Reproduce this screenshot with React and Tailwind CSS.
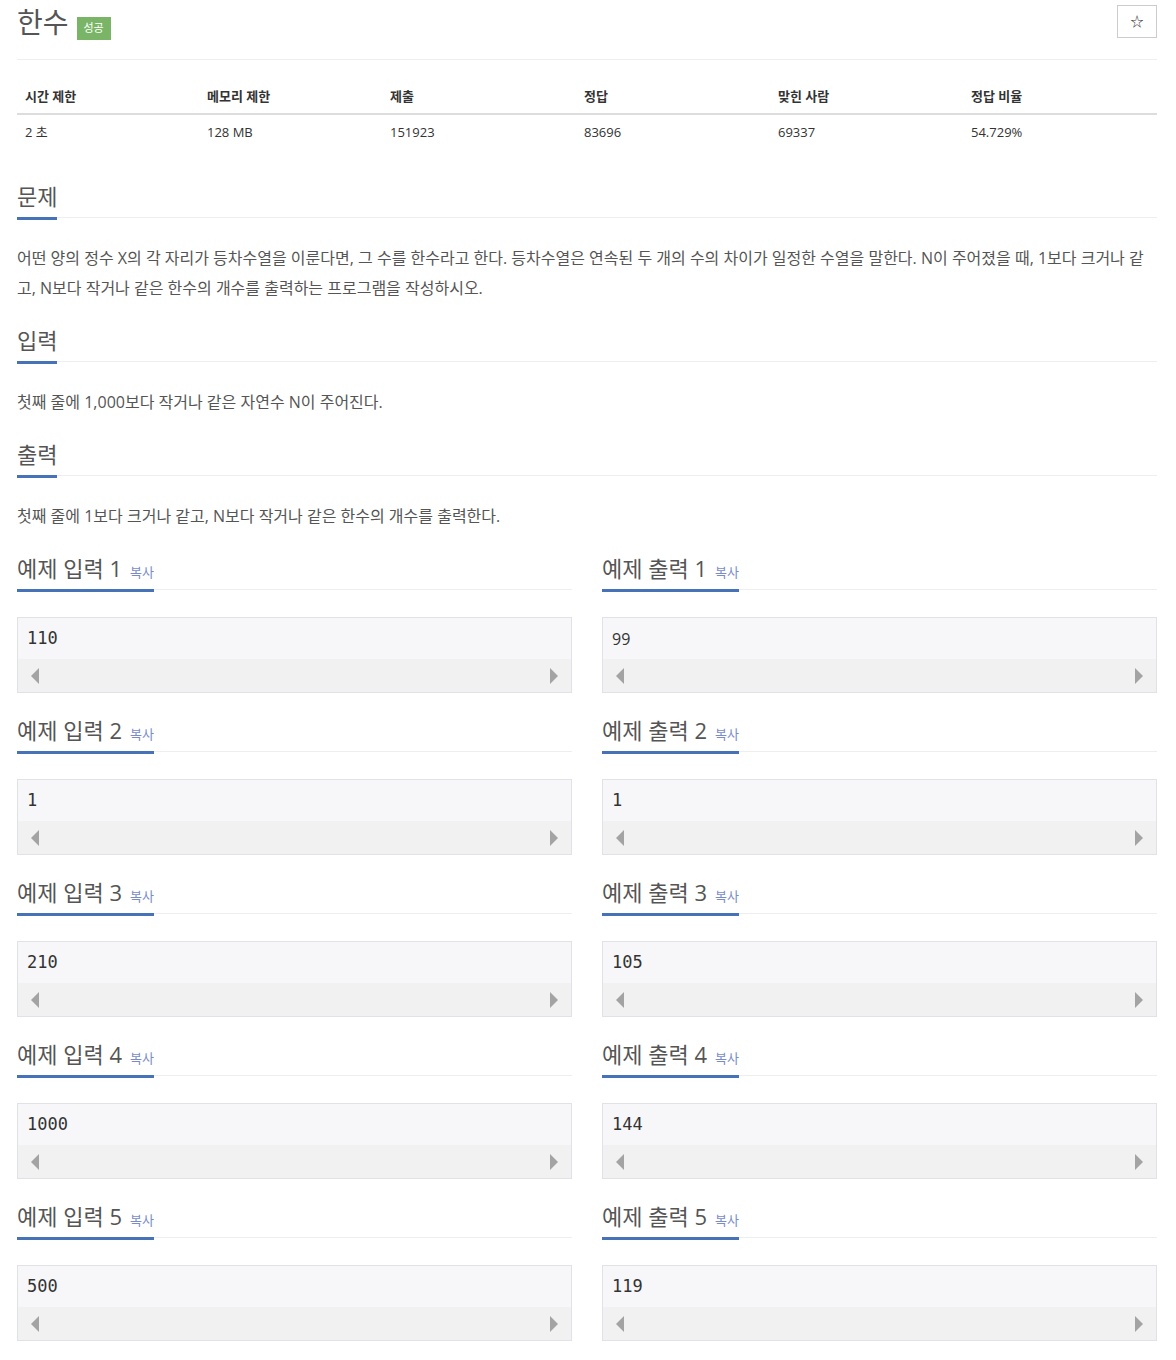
import { useState } from "react";

const stats = [
  { label: "시간 제한", value: "2 초" },
  { label: "메모리 제한", value: "128 MB" },
  { label: "제출", value: "151923" },
  { label: "정답", value: "83696" },
  { label: "맞힌 사람", value: "69337" },
  { label: "정답 비율", value: "54.729%" },
];

const samples = [
  { input: "110", output: "99", sansOut: true },
  { input: "1", output: "1" },
  { input: "210", output: "105" },
  { input: "1000", output: "144" },
  { input: "500", output: "119" },
];

function Headline({ children, copy }) {
  return (
    <div className="flex border-b border-[#eee]">
      <h2 className="-mb-[3px] block border-b-[3px] border-[#4673b8] pb-[5px] text-[22px] leading-[32px] font-normal text-[#555]">
        {children}
        {copy && (
          <span className="ml-[8px] text-[13px] leading-none text-[#7a8cc8]">복사</span>
        )}
      </h2>
    </div>
  );
}

function Arrow({ dir }) {
  return (
    <svg width="8" height="16" viewBox="0 0 8 16">
      {dir === "left" ? (
        <polygon points="8,0 8,16 0,8" fill="#a3a3a3" />
      ) : (
        <polygon points="0,0 0,16 8,8" fill="#a3a3a3" />
      )}
    </svg>
  );
}

function SampleBox({ text, sans }) {
  return (
    <div className="mt-[27px] border border-[#e1e1e8] bg-[#f7f7f9]">
      <div
        className={`flex h-[41px] items-center px-[9px] text-[#333] ${
          sans
            ? "font-['Open_Sans',sans-serif] text-[16px]"
            : "font-['DejaVu_Sans_Mono',monospace] text-[17px]"
        }`}
      >
        {text}
      </div>
      <div className="flex h-[33px] items-center justify-between bg-[#f1f1f1] px-[13px]">
        <Arrow dir="left" />
        <Arrow dir="right" />
      </div>
    </div>
  );
}

export default function App() {
  const [starred, setStarred] = useState(false);

  return (
    <div className="min-h-[1360px] bg-white font-['Open_Sans','Noto_Sans_CJK_KR',sans-serif]">
      <div className="ml-[17px] w-[1140px]">
        {/* Title */}
        <div className="flex items-start justify-between border-b border-[#eee] pt-[5px] pb-[20px]">
          <div className="flex items-end">
            <h1 className="text-[28px] leading-[34px] font-normal text-[#555]">
              한수
            </h1>
            <span className="ml-[8px] -mb-[1px] flex h-[23px] w-[34px] items-center justify-center bg-[#7ab567] text-[11px] text-white">
              성공
            </span>
          </div>
          <button
            onClick={() => setStarred(!starred)}
            className="flex h-[33px] w-[40px] items-center justify-center border border-[#ccc] bg-white text-[13px] text-[#333]"
          >
            {starred ? "★" : "☆"}
          </button>
        </div>

        {/* Stats table */}
        <div className="mt-[21px] grid grid-cols-[182px_183px_194px_194px_193px_194px] text-[13px] text-[#333]">
          {stats.map((s) => (
            <div
              key={s.label}
              className="flex h-[34px] items-center border-b-2 border-[#ddd] px-2 font-bold"
            >
              {s.label}
            </div>
          ))}
          {stats.map((s) => (
            <div key={s.label} className="flex h-[36px] items-center px-2">
              {s.value}
            </div>
          ))}
        </div>

        {/* 문제 */}
        <div className="mt-[29px]">
          <Headline>문제</Headline>
          <p className="mt-[25px] text-[16px] leading-[30px] text-[#555]">
            어떤 양의 정수 X의 각 자리가 등차수열을 이룬다면, 그 수를 한수라고 한다. 등차수열은 연속된 두 개의 수의 차이가 일정한 수열을 말한다. N이 주어졌을 때, 1보다 크거나 같고, N보다 작거나 같은 한수의 개수를 출력하는 프로그램을 작성하시오.
          </p>
        </div>

        {/* 입력 */}
        <div className="mt-[21px]">
          <Headline>입력</Headline>
          <p className="mt-[25px] text-[16px] leading-[30px] text-[#555]">
            첫째 줄에 1,000보다 작거나 같은 자연수 N이 주어진다.
          </p>
        </div>

        {/* 출력 */}
        <div className="mt-[21px]">
          <Headline>출력</Headline>
          <p className="mt-[25px] text-[16px] leading-[30px] text-[#555]">
            첫째 줄에 1보다 크거나 같고, N보다 작거나 같은 한수의 개수를 출력한다.
          </p>
        </div>

        {/* Samples */}
        <div className="grid grid-cols-2 gap-x-[30px]">
          {samples.map((s, i) => (
            <div key={"s" + i} className="contents">
              <div className="mt-[21px]">
                <Headline copy>예제 입력 {i + 1}</Headline>
                <SampleBox text={s.input} />
              </div>
              <div className="mt-[21px]">
                <Headline copy>예제 출력 {i + 1}</Headline>
                <SampleBox text={s.output} sans={s.sansOut} />
              </div>
            </div>
          ))}
        </div>
      </div>
    </div>
  );
}
